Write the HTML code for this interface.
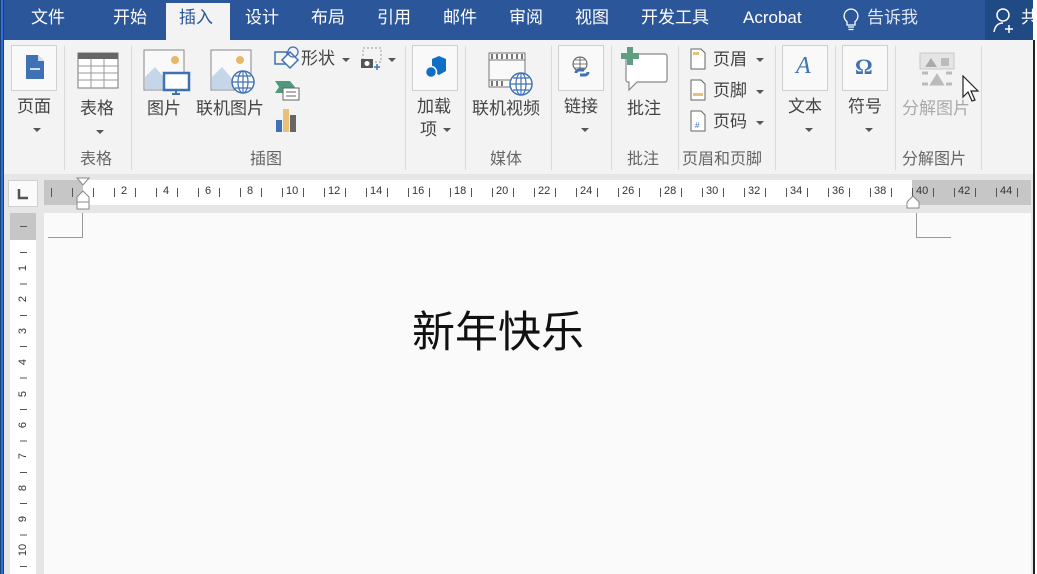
<!DOCTYPE html>
<html><head><meta charset="utf-8"><style>
*{margin:0;padding:0;box-sizing:border-box}
body{width:1037px;height:574px;overflow:hidden;background:#e6e6e6;position:relative;font-family:"Liberation Sans","Noto Sans CJK SC",sans-serif}
.a{position:absolute}
.tab{position:absolute;top:6px;color:#fff;font-size:17px;line-height:24px}
.lbl{position:absolute;font-size:17px;color:#444;line-height:22px;white-space:nowrap}
.glbl{position:absolute;top:149px;font-size:16px;color:#666;line-height:22px;white-space:nowrap}
.sep{position:absolute;top:46px;width:1px;height:124px;background:#dadada}
.box{position:absolute;border:1px solid #d0d0d0;background:#f9f9f9}
.arr{position:absolute;width:0;height:0;border-left:4px solid transparent;border-right:4px solid transparent;border-top:4px solid #555}
.rn{position:absolute;top:184px;font-size:11px;color:#333;line-height:14px}
.vn{position:absolute;left:16px;font-size:11px;color:#333;transform:rotate(-90deg);width:14px;text-align:center;line-height:12px}
</style></head><body>
<div class="a" style="left:0;top:0;width:1037px;height:40px;background:#2b579a"></div>
<div class="a" style="left:985px;top:0;width:52px;height:40px;background:#1f4a84"></div>
<div class="a" style="left:166px;top:3px;width:64px;height:37px;background:#f3f3f3"></div>
<div class="tab" style="left:31px">文件</div>
<div class="tab" style="left:113px">开始</div>
<div class="tab" style="left:179px;color:#2b579a">插入</div>
<div class="tab" style="left:245px">设计</div>
<div class="tab" style="left:311px">布局</div>
<div class="tab" style="left:377px">引用</div>
<div class="tab" style="left:443px">邮件</div>
<div class="tab" style="left:509px">审阅</div>
<div class="tab" style="left:575px">视图</div>
<div class="tab" style="left:641px">开发工具</div>
<div class="tab" style="left:743px">Acrobat</div>
<svg class="a" style="left:842px;top:8px" width="18" height="24" viewBox="0 0 18 24"><path d="M9 1a7 7 0 0 0-4 12.7V17h8v-3.3A7 7 0 0 0 9 1z" fill="none" stroke="#fff" stroke-width="1.3"/><path d="M6 19h6M6.5 21.5h5" stroke="#fff" stroke-width="1.3"/></svg>
<div class="tab" style="left:867px;color:#dde6f2">告诉我</div>
<svg class="a" style="left:993px;top:7px" width="24" height="26" viewBox="0 0 24 26"><circle cx="10" cy="8" r="6" fill="none" stroke="#fff" stroke-width="1.5"/><path d="M1 25c1-6 4-9 9-9" fill="none" stroke="#fff" stroke-width="1.5"/><path d="M16 18v8M12 22h8" stroke="#fff" stroke-width="1.5"/></svg>
<div class="tab" style="left:1021px">共</div>
<div class="a" style="left:0;top:40px;width:1037px;height:134px;background:#f3f3f3"></div>
<div class="sep" style="left:64px"></div><div class="sep" style="left:131px"></div><div class="sep" style="left:405px"></div><div class="sep" style="left:465px"></div><div class="sep" style="left:551px"></div><div class="sep" style="left:611px"></div><div class="sep" style="left:678px"></div><div class="sep" style="left:775px"></div><div class="sep" style="left:835px"></div><div class="sep" style="left:895px"></div><div class="sep" style="left:981px"></div>
<div class="box" style="left:11px;top:45px;width:46px;height:46px"></div>
<svg class="a" style="left:25px;top:54px" width="20" height="26"><path d="M1 1h12l6 6v18H1z" fill="#3f72b5"/><path d="M13 1v6h6" fill="#cfe0f3"/><rect x="5" y="14" width="10" height="2" fill="#cfe0f3"/></svg>
<div class="lbl" style="left:17px;top:96px">页面</div><div class="arr" style="left:33px;top:128px"></div>
<svg class="a" style="left:77px;top:52px" width="42" height="37"><rect x="1" y="1" width="40" height="35" fill="#fff" stroke="#777"/><rect x="1" y="1" width="40" height="6" fill="#666"/><path d="M1 14h40M1 21h40M1 28h40M14 7v29M27 7v29" stroke="#999"/></svg>
<div class="lbl" style="left:80px;top:98px">表格</div><div class="arr" style="left:96px;top:130px"></div>
<div class="glbl" style="left:80px">表格</div>
<svg class="a" style="left:143px;top:49px" width="48" height="46"><rect x="1" y="1" width="40" height="40" fill="#f9f9f9" stroke="#888"/><circle cx="32" cy="11" r="4" fill="#e8b86a"/><path d="M2 40V28l10-10 12 14v8z" fill="#c5d6e8"/><rect x="21" y="24" width="25" height="17" fill="#fff" stroke="#3f72b5" stroke-width="2.5"/><path d="M33 41v3M29 45h8" stroke="#3f72b5" stroke-width="2"/></svg>
<div class="lbl" style="left:147px;top:98px">图片</div>
<svg class="a" style="left:210px;top:49px" width="48" height="46"><rect x="1" y="1" width="40" height="40" fill="#f9f9f9" stroke="#888"/><circle cx="30" cy="11" r="4" fill="#e8b86a"/><path d="M2 40V28l10-10 12 14v8z" fill="#c5d6e8"/><circle cx="33" cy="33" r="11" fill="#fff" stroke="#3f72b5" stroke-width="1.5"/><path d="M22 33h22M33 22v22M25 27h16M25 39h16" stroke="#3f72b5" stroke-width="1.2"/><ellipse cx="33" cy="33" rx="5" ry="11" fill="none" stroke="#3f72b5" stroke-width="1.2"/></svg>
<div class="lbl" style="left:196px;top:98px">联机图片</div>
<svg class="a" style="left:274px;top:46px" width="26" height="26"><rect x="1" y="6" width="12" height="12" fill="none" stroke="#3f72b5" stroke-width="1.5"/><path d="M16 6l8 8-8 8-8-8z" fill="#fff" stroke="#3f72b5" stroke-width="1.5"/><circle cx="19" cy="6" r="5" fill="none" stroke="#3f72b5" stroke-width="1.3"/></svg>
<div class="lbl" style="left:301px;top:48px">形状</div><div class="arr" style="left:342px;top:58px"></div>
<svg class="a" style="left:360px;top:47px" width="24" height="24"><rect x="3" y="1" width="18" height="14" fill="none" stroke="#999" stroke-dasharray="2 2"/><rect x="1" y="12" width="12" height="9" fill="#555"/><circle cx="7" cy="16.5" r="2.5" fill="#fff"/><path d="M17 17v6M14 20h6" stroke="#3f72b5" stroke-width="1.5"/></svg>
<div class="arr" style="left:388px;top:58px"></div>
<svg class="a" style="left:274px;top:80px" width="26" height="22"><path d="M1 1h15l5 6-5 6H1l4-6z" fill="#4e9a7c"/><rect x="9" y="8" width="16" height="12" fill="#fff" stroke="#666"/><path d="M12 12h10M12 16h10" stroke="#666"/></svg>
<svg class="a" style="left:275px;top:108px" width="22" height="24"><rect x="1" y="12" width="6" height="12" fill="#3f72b5"/><rect x="8" y="1" width="6" height="23" fill="#e8c07a"/><rect x="15" y="7" width="6" height="17" fill="#666"/></svg>
<div class="glbl" style="left:250px">插图</div>
<div class="box" style="left:412px;top:45px;width:46px;height:46px"></div>
<svg class="a" style="left:425px;top:56px" width="22" height="24"><path d="M7 3l7-3 7 3v12l-7 4-7-4z" fill="#0f6fc6"/><circle cx="6" cy="16" r="5.5" fill="#0f6fc6" stroke="#f9f9f9" stroke-width="1.5"/></svg>
<div class="lbl" style="left:417px;top:96px">加载</div>
<div class="lbl" style="left:420px;top:119px">项</div><div class="arr" style="left:443px;top:128px"></div>
<svg class="a" style="left:488px;top:52px" width="46" height="44"><rect x="1" y="1" width="36" height="34" fill="#f9f9f9" stroke="#777"/><path d="M1 8h36M1 28h36" stroke="#777"/><path d="M4 2v5M9 2v5M14 2v5M19 2v5M24 2v5M29 2v5M34 2v5M4 29v5M9 29v5M14 29v5" stroke="#777" stroke-width="2"/><circle cx="33" cy="32" r="11" fill="#fff" stroke="#3f72b5" stroke-width="1.5"/><path d="M22 32h22M33 21v22M25 26h16M25 38h16" stroke="#3f72b5" stroke-width="1.2"/><ellipse cx="33" cy="32" rx="5" ry="11" fill="none" stroke="#3f72b5" stroke-width="1.2"/></svg>
<div class="lbl" style="left:472px;top:98px">联机视频</div>
<div class="glbl" style="left:490px">媒体</div>
<div class="box" style="left:558px;top:45px;width:46px;height:46px"></div>
<svg class="a" style="left:570px;top:55px" width="24" height="26"><circle cx="10" cy="9" r="7" fill="#fff" stroke="#555"/><path d="M3 9h14M10 2v14M5 5h10M5 13h10" stroke="#555" stroke-width=".8"/><path d="M6 18a3 3 0 0 1 3-3h5M18 17a3 3 0 0 1-3 3h-5" fill="none" stroke="#3f72b5" stroke-width="3"/></svg>
<div class="lbl" style="left:564px;top:96px">链接</div><div class="arr" style="left:581px;top:128px"></div>
<svg class="a" style="left:620px;top:46px" width="48" height="46"><path d="M8 8h37a2 2 0 0 1 2 2v24a2 2 0 0 1-2 2H17l-8 8v-8H8a2 2 0 0 1-2-2V10a2 2 0 0 1 2-2z" fill="#fff" stroke="#888" stroke-width="1.2"/><path d="M5 1h6v6h6v6h-6v6H5v-6h-6V7h6z" fill="#5f9e83" transform="translate(2 0)"/></svg>
<div class="lbl" style="left:627px;top:98px">批注</div>
<div class="glbl" style="left:627px">批注</div>
<svg class="a" style="left:690px;top:48px" width="16" height="22"><path d="M1 1h10l4 4v16H1z" fill="#fff" stroke="#666"/><rect x="3" y="4" width="6" height="3" fill="#e8c07a"/></svg>
<div class="lbl" style="left:713px;top:49px">页眉</div><div class="arr" style="left:756px;top:58px"></div>
<svg class="a" style="left:690px;top:79px" width="16" height="22"><path d="M1 1h10l4 4v16H1z" fill="#fff" stroke="#666"/><rect x="3" y="14" width="10" height="3" fill="#e8c07a"/></svg>
<div class="lbl" style="left:713px;top:80px">页脚</div><div class="arr" style="left:756px;top:90px"></div>
<svg class="a" style="left:690px;top:110px" width="16" height="22"><path d="M1 1h10l4 4v16H1z" fill="#fff" stroke="#666"/><text x="5" y="18" font-size="8" fill="#3f72b5" font-family="Liberation Sans">#</text></svg>
<div class="lbl" style="left:713px;top:111px">页码</div><div class="arr" style="left:756px;top:121px"></div>
<div class="glbl" style="left:682px">页眉和页脚</div>
<div class="box" style="left:782px;top:45px;width:46px;height:46px"></div>
<div class="a" style="left:796px;top:53px;font-size:24px;font-style:italic;color:#3f72b5;font-family:'Liberation Serif',serif">A</div>
<div class="lbl" style="left:788px;top:96px">文本</div><div class="arr" style="left:805px;top:128px"></div>
<div class="box" style="left:842px;top:45px;width:46px;height:46px"></div>
<div class="a" style="left:855px;top:54px;font-size:22px;font-weight:bold;color:#3f72b5;font-family:'Liberation Serif',serif">Ω</div>
<div class="lbl" style="left:848px;top:96px">符号</div><div class="arr" style="left:865px;top:128px"></div>
<svg class="a" style="left:919px;top:52px" width="38" height="36"><rect x="1" y="1" width="34" height="16" fill="#e5e5e5" stroke="#c8c8c8"/><path d="M6 15l6-9 6 9z" fill="#aaa"/><rect x="22" y="6" width="8" height="8" fill="#bbb"/><path d="M3 21h6M3 32h6M27 21h6M27 32h6M13 32l5-8 5 8z" stroke="#bbb" stroke-width="3" fill="#bbb"/></svg>
<div class="lbl" style="left:902px;top:98px;color:#aaa">分解图片</div>
<div class="glbl" style="left:902px">分解图片</div>
<svg class="a" style="left:962px;top:75px" width="20" height="28"><path d="M1 1v21l5-5 4 9 3-1-4-9h7z" fill="#fff" stroke="#222" stroke-width="1.2"/></svg>
<div class="a" style="left:0;top:174px;width:1037px;height:400px;background:#e6e6e6"></div>
<div class="a" style="left:8px;top:180px;width:30px;height:27px;background:#fafafa;border:1px solid #d0d0d0"></div>
<svg class="a" style="left:17px;top:188px" width="12" height="12"><path d="M2 1v9h9" fill="none" stroke="#555" stroke-width="2.5"/></svg>
<div class="a" style="left:44px;top:180px;width:987px;height:25px;background:#c6c6c6"></div>
<div class="a" style="left:83px;top:180px;width:829px;height:25px;background:#fff"></div>
<div class="a" style="left:41px;top:188px;width:990px;height:9px;background:repeating-linear-gradient(to right,transparent 0 10px,#555 10px 11px,transparent 11px 21px)"></div>
<div class="rn" style="left:121px">2</div><div class="rn" style="left:163px">4</div><div class="rn" style="left:205px">6</div><div class="rn" style="left:247px">8</div>
<div class="rn" style="left:286px">10</div><div class="rn" style="left:328px">12</div><div class="rn" style="left:370px">14</div><div class="rn" style="left:412px">16</div><div class="rn" style="left:454px">18</div><div class="rn" style="left:496px">20</div><div class="rn" style="left:538px">22</div><div class="rn" style="left:580px">24</div><div class="rn" style="left:622px">26</div><div class="rn" style="left:664px">28</div><div class="rn" style="left:706px">30</div><div class="rn" style="left:748px">32</div><div class="rn" style="left:790px">34</div><div class="rn" style="left:832px">36</div><div class="rn" style="left:874px">38</div><div class="rn" style="left:916px">40</div><div class="rn" style="left:958px">42</div><div class="rn" style="left:1000px">44</div>
<svg class="a" style="left:76px;top:177px" width="14" height="36"><path d="M1 1h12l-6 7z" fill="#fff" stroke="#888"/><path d="M7 14l6 6v5H1v-5z" fill="#fff" stroke="#888"/><rect x="1" y="25" width="12" height="7" fill="#fff" stroke="#888"/></svg>
<svg class="a" style="left:906px;top:195px" width="14" height="14"><path d="M7 1l6 6v6H1V7z" fill="#fff" stroke="#888"/></svg>
<div class="a" style="left:10px;top:213px;width:26px;height:361px;background:#fff"></div>
<div class="a" style="left:10px;top:213px;width:26px;height:27px;background:#c6c6c6"></div>
<div class="a" style="left:20px;top:226px;width:7px;height:1px;background:#555"></div>
<div class="a" style="left:20px;top:241px;width:7px;height:333px;background:repeating-linear-gradient(to bottom,transparent 0 11px,#555 11px 12px,transparent 12px 31.4px)"></div>
<div class="vn" style="top:262px">1</div><div class="vn" style="top:293px">2</div><div class="vn" style="top:325px">3</div><div class="vn" style="top:356px">4</div><div class="vn" style="top:388px">5</div><div class="vn" style="top:419px">6</div><div class="vn" style="top:450px">7</div><div class="vn" style="top:482px">8</div><div class="vn" style="top:513px">9</div><div class="vn" style="top:544px;left:13px;width:20px">10</div>
<div class="a" style="left:44px;top:213px;width:987px;height:361px;background:#fafafa"></div>
<div class="a" style="left:48px;top:213px;width:35px;height:25px;border-right:1px solid #999;border-bottom:1px solid #999"></div>
<div class="a" style="left:916px;top:213px;width:35px;height:25px;border-left:1px solid #999;border-bottom:1px solid #999"></div>
<div class="a" style="left:412px;top:306px;font-size:43px;line-height:54px;color:#111;font-family:'Liberation Sans','Noto Sans CJK SC',sans-serif">新年快乐</div>
<div class="a" style="left:1033px;top:0;width:4px;height:574px;background:#fff"></div>
<div class="a" style="left:1033px;top:40px;width:2px;height:534px;background:#222"></div>
<div class="a" style="left:0;top:0;width:4px;height:574px;background:#1d3f7a"></div>
<div class="a" style="left:1px;top:0;width:2px;height:574px;background:#2f6fd6"></div>
</body></html>
